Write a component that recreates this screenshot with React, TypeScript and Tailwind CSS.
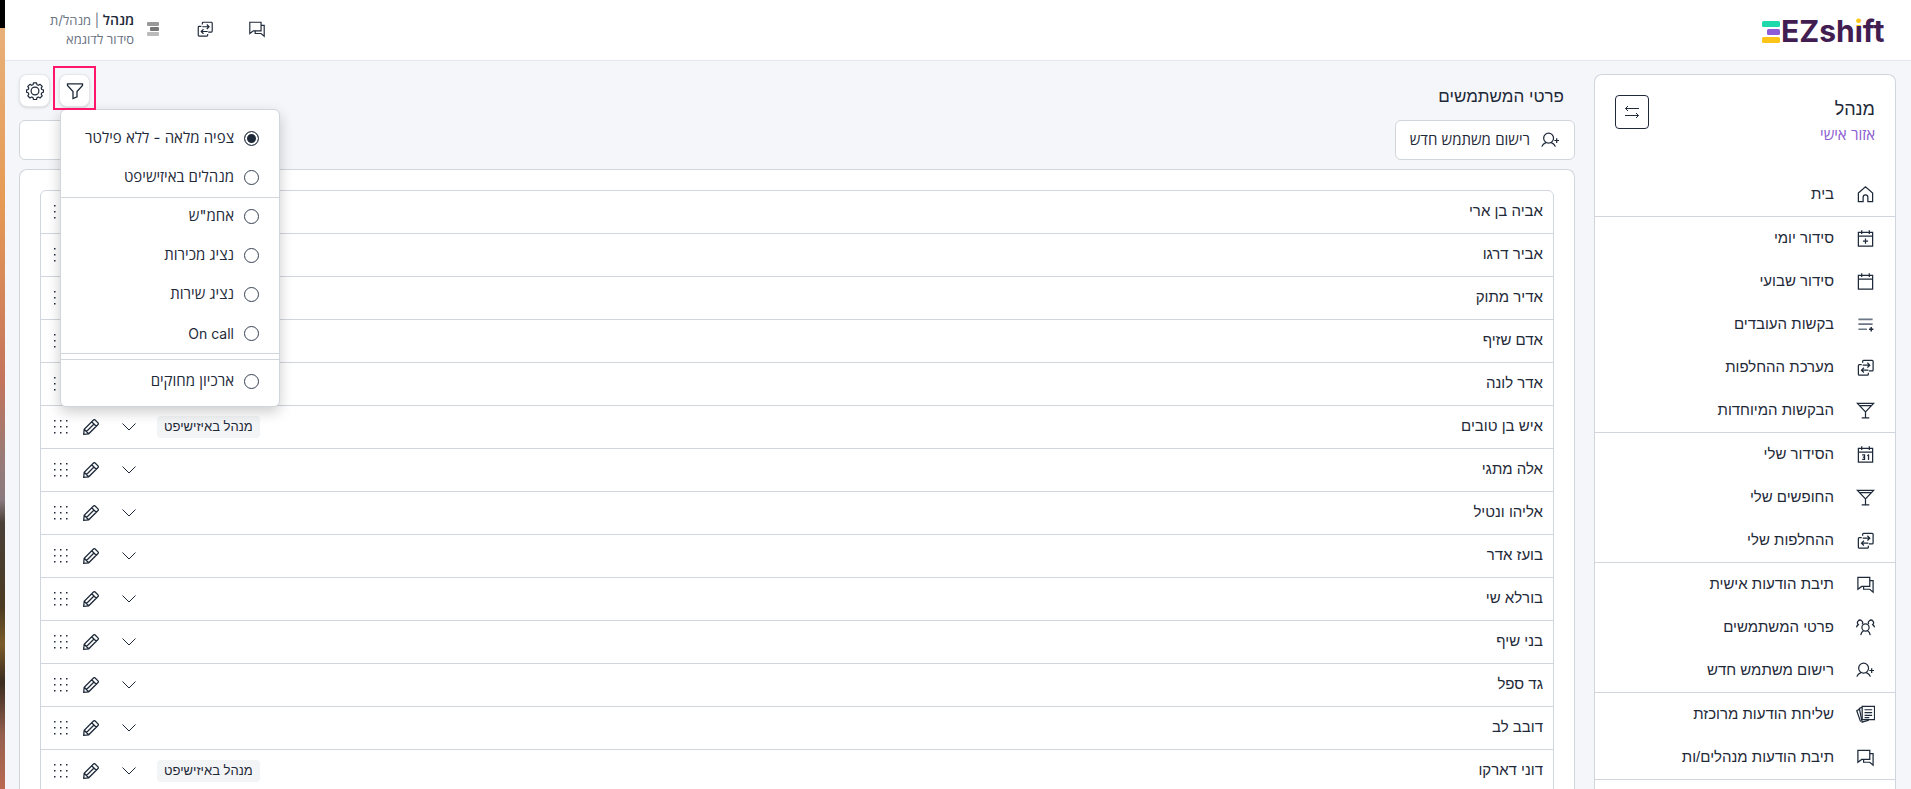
import type { ReactNode } from 'react';

type IconName =
  | 'home' | 'calendarPlus' | 'calendar' | 'calendar31' | 'listPlus' | 'swap'
  | 'glass' | 'chat' | 'users' | 'userPlus' | 'papers';

const shapes: Record<IconName, ReactNode> = {
  home: <path d="M2.5 8.5 10 2l7.500 6.500V17.500H12.500V13a2.500 2.500 0 0 0-5 0v4.500H2.500z" />,
  calendarPlus: <path d="M2.500 3.500h15v14.500h-15zM2.500 7.500h15M6 1.200v4M14 1.200v4M10 10v5.500M7.300 12.700h5.400" />,
  calendar: <path d="M2.500 3.500h15v14.500h-15zM2.500 7.500h15M6 1.200v4M14 1.200v4" />,
  calendar31: (
    <>
      <path d="M2.500 3.500h15v14.500h-15zM2.500 7.500h15M6 1.200v4M14 1.200v4" />
      <path strokeWidth="1.300" d="M6.500 10.500H9v4.700H6.500M7.200 12.800H9M11.800 11.300l1.400-.7v5.200" />
    </>
  ),
  listPlus: (
    <>
      <path stroke="#6b7785" strokeWidth="1.800" d="M2.500 4.500h15M2.500 9.700h15M2.500 15h9" />
      <path strokeWidth="1.500" d="M16 12.700v4.600M13.700 15h4.600" />
    </>
  ),
  swap: (
    <>
      <path d="M7 5V3.500q0-1 1-1h9q1 0 1 1v9q0 1-1 1h-3.500M13 15.500v1.500q0 1-1 1H3.500q-1 0-1-1V8q0-1 1-1H6" />
      <path d="M7 7.500h7M12 5l2.500 2.500L12 10M13 12.800H6M8.300 10.300 5.800 12.800l2.500 2.500" />
    </>
  ),
  glass: <path d="M1.500 2.500h17L10 11.500zM4 4.800h12M10 11.500v6M6 17.800h8" />,
  chat: (
    <>
      <path d="M2 2.500h12.500v9.500H6L2 15z" />
      <path d="M14.500 6H18v12l-3.500-3H8v-3" />
    </>
  ),
  users: (
    <>
      <circle cx="10" cy="10" r="3.800" />
      <path d="M5 18q.500-3.500 3-4.600M15 18q-.500-3.500-3-4.600M6.500 6.500A2.700 2.700 0 1 0 2.500 7Q.800 8 .500 9.800M13.500 6.500a2.700 2.700 0 1 1 4 .5q1.700 1 2 2.800" />
    </>
  ),
  userPlus: (
    <>
      <circle cx="8" cy="7.500" r="5.200" />
      <path d="M.800 16.500q1-3 4.700-4.500M15.200 16.500q-1-3-4.700-4.500M16.500 7.500v5M14 10h5" />
    </>
  ),
  papers: (
    <>
      <path d="M6.500 1.500h13v14h-13z" />
      <path d="M9 5h8M9 8h8M9 11h8M9 13.300h5M6.300 2.500 3.500 3.500l3 14.500 7-2M3.300 4.500.800 6l4 11.500" />
    </>
  ),
};

function Icon({ name, className = 'size-[19px]' }: { name: IconName; className?: string }) {
  return (
    <svg viewBox="0 0 20 20" fill="none" stroke="currentColor" strokeWidth="1.300" className={className} aria-hidden="true">
      {shapes[name]}
    </svg>
  );
}

const menu: { icon: IconName; label: string }[][] = [
  [{ icon: 'home', label: 'בית' }],
  [
    { icon: 'calendarPlus', label: 'סידור יומי' },
    { icon: 'calendar', label: 'סידור שבועי' },
    { icon: 'listPlus', label: 'בקשות העובדים' },
    { icon: 'swap', label: 'מערכת ההחלפות' },
    { icon: 'glass', label: 'הבקשות המיוחדות' },
  ],
  [
    { icon: 'calendar31', label: 'הסידור שלי' },
    { icon: 'glass', label: 'החופשים שלי' },
    { icon: 'swap', label: 'ההחלפות שלי' },
  ],
  [
    { icon: 'chat', label: 'תיבת הודעות אישית' },
    { icon: 'users', label: 'פרטי המשתמשים' },
    { icon: 'userPlus', label: 'רישום משתמש חדש' },
  ],
  [
    { icon: 'papers', label: 'שליחת הודעות מרוכזת' },
    { icon: 'chat', label: 'תיבת הודעות מנהלים/ות' },
  ],
];

const users: { name: string; badge?: string }[] = [
  { name: 'אביה בן ארי' },
  { name: 'אביר דרגו' },
  { name: 'אדיר מתוק' },
  { name: 'אדם שזיף' },
  { name: 'אדר לונה' },
  { name: 'איש בן טובים', badge: 'מנהל באיזישיפט' },
  { name: 'אלה מתגי' },
  { name: 'אליהו ונטיל' },
  { name: 'בועז אדר' },
  { name: 'בורלא שי' },
  { name: 'בני שיף' },
  { name: 'גד ספל' },
  { name: 'דובב לב' },
  { name: 'דוני דארקו', badge: 'מנהל באיזישיפט' },
];

// the sturdier Hebrew face, for names, menu entries and headings
const strongFont = "font-['Liberation_Sans',sans-serif]";

function Logo() {
  return (
    <svg viewBox="0 0 128 40" className="h-10 w-32" direction="ltr" role="img" aria-label="EZshift">
      <defs>
        {/* paints the dot of the "i" yellow and its stem purple */}
        <linearGradient id="dot" gradientUnits="userSpaceOnUse" x1="0" y1="0" x2="0" y2="40">
          <stop offset="0.400" stopColor="#fcc419" />
          <stop offset="0.400" stopColor="#421d52" />
        </linearGradient>
      </defs>
      <rect x="0" y="11" width="18" height="6" rx="1.500" fill="#1fd8ac" />
      <rect x="5" y="19" width="13" height="6" rx="1.500" fill="#8b5cd6" />
      <rect x="0" y="27" width="18" height="6" rx="1.500" fill="#fcc419" />
      <text x="19" y="32" fill="#421d52" fontFamily="Inter, sans-serif" fontWeight="700" fontSize="30">
        EZsh<tspan fill="url(#dot)">i</tspan>ft
      </text>
    </svg>
  );
}

function Header() {
  return (
    <header className="flex h-[61px] shrink-0 items-center justify-between border-b border-[#e3e6f0] bg-white ps-[21px] pe-[45px]">
      <a href="#home"><Logo /></a>
      <div className="flex items-center pb-[2px]">
        <button aria-label="הודעות" className="me-[34px]"><Icon name="chat" className="size-[18px]" /></button>
        <button aria-label="החלפות" className="me-[37px]"><Icon name="swap" className="size-[18px]" /></button>
        <svg viewBox="0 0 12 14" className="me-[13px] h-[14px] w-3" aria-hidden="true">
          <rect width="12" height="4" rx="1" fill="#999" />
          <rect x="3" y="5" width="9" height="4" rx="1" fill="#777" />
          <rect y="10" width="12" height="4" rx="1" fill="#bbb" />
        </svg>
        <div className="text-[13px] leading-[19px] text-gray-500">
          <p><strong className="text-[14px] font-semibold text-gray-800">מנהל</strong> | מנהל/ת</p>
          <p>סידור לדוגמא</p>
        </div>
      </div>
    </header>
  );
}

function Sidebar() {
  return (
    <aside className="w-[302px] shrink-0 rounded-t-lg border border-b-0 border-gray-300 bg-white">
      <div className="flex h-[98px] items-start justify-between px-5 pt-5">
        <div>
          <h2 className={`text-[18px] leading-7 ${strongFont}`}>מנהל</h2>
          <p className="text-[15px] leading-6 text-[#8b5cd0]">אזור אישי</p>
        </div>
        <button aria-label="כיווץ התפריט" className="flex size-[34px] items-center justify-center rounded border border-gray-800">
          <svg viewBox="0 0 16 16" fill="none" stroke="currentColor" className="size-4" aria-hidden="true">
            <path d="M15 4.500H1.500M4 2 1.500 4.500 4 7M1 11.500h13.500M12 9l2.500 2.500L12 14" />
          </svg>
        </button>
      </div>
      <nav className={strongFont}>
        {menu.map((group, i) => (
          <ul key={i} className="border-b border-gray-300">
            {group.map((item) => (
              <li key={item.label}>
                <a href="#menu" className="flex h-[43px] items-center gap-[22px] ps-5 pb-px text-[15px]">
                  <Icon name={item.icon} />
                  {item.label}
                </a>
              </li>
            ))}
          </ul>
        ))}
      </nav>
    </aside>
  );
}

function FilterOption({ label, checked, size = 'text-[15px]' }: { label: string; checked?: boolean; size?: string }) {
  return (
    <label className={`flex h-[39px] items-center gap-[10px] px-5 ${size}`}>
      <input
        type="radio"
        name="filter"
        defaultChecked={checked}
        className="size-[15px] appearance-none rounded-full border border-gray-700 bg-white checked:bg-gray-800 checked:shadow-[inset_0_0_0_2px_#fff]"
      />
      {label}
    </label>
  );
}

function FilterMenu() {
  return (
    <div className="absolute top-[35px] left-px z-10 w-[220px] rounded-md border border-gray-300 bg-white pt-[9px] pb-[5px] shadow-[0_5px_14px_rgba(0,0,0,0.2)]">
      <div className="-mb-px border-b border-gray-300">
        <FilterOption label="צפיה מלאה - ללא פילטר" checked />
        <FilterOption label="מנהלים באיזישיפט" />
      </div>
      <div className="border-b border-gray-300">
        <FilterOption label={'אחמ"ש'} />
        <FilterOption label="נציג מכירות" />
        <FilterOption label="נציג שירות" />
        <FilterOption label="On call" size="text-[14px]" />
      </div>
      <div className="mt-[5px] border-t border-gray-300 pt-[2px]">
        <FilterOption label="ארכיון מחוקים" />
      </div>
    </div>
  );
}

function Toolbar() {
  const button = 'flex h-[33px] w-[31px] items-center justify-center rounded-lg border border-gray-200 bg-white shadow-sm';
  return (
    <div className="flex gap-[9px]">
      <div className="relative">
        <button aria-label="סינון" className={button}>
          <svg viewBox="0 0 18 18" fill="none" stroke="currentColor" strokeWidth="1.300" className="size-[18px]" aria-hidden="true">
            <path d="M1.500 1.800h15v1.700L11 9.500v5.300l-4 1.700v-7L1.500 3.500z" />
          </svg>
        </button>
        <span className="pointer-events-none absolute -inset-x-[6px] -top-2 -bottom-[3px] z-20 border-2 border-[#ff1569]" />
        <FilterMenu />
      </div>
      <button aria-label="הגדרות" className={button}>
        <svg viewBox="0 0 18 18" fill="none" stroke="currentColor" strokeWidth="1.200" strokeLinejoin="round" className="size-[18px]" aria-hidden="true">
          <path d="M7.500.8h3l.5 1.900 1.400.6 1.700-1 2.100 2.100-1 1.700.6 1.400 1.600.4v2.400l-1.600.5-.6 1.400 1 1.700-2.100 2.100-1.700-1-1.400.6-.5 1.900h-3l-.5-1.900-1.400-.6-1.700 1-2.100-2.100 1-1.700-.6-1.400-1.600-.5V7.900l1.600-.4.6-1.400-1-1.700 2.100-2.100 1.700 1L7 2.700z" />
          <circle cx="9" cy="9" r="3.900" />
        </svg>
      </button>
    </div>
  );
}

function UserRow({ name, badge }: { name: string; badge?: string }) {
  return (
    <li className={`flex h-[43px] items-center border-b border-gray-300 ps-[10px] pe-[13px] pb-px text-[15px] ${strongFont}`}>
      <span className="flex-1">{name}</span>
      {badge && <span className="me-[21px] h-[22px] rounded bg-gray-100 px-[7px] text-[13px] leading-[22px]">{badge}</span>}
      <button aria-label="הרחבה" className="me-[23px]">
        <svg viewBox="0 0 14 14" fill="none" stroke="currentColor" className="size-[14px]" aria-hidden="true">
          <path d="m.500 3.500 6.500 6.500 6.500-6.500" />
        </svg>
      </button>
      <button aria-label="עריכה" className="me-[15px]">
        <svg viewBox="0 0 16 16" fill="none" stroke="currentColor" strokeWidth="1.300" className="size-4" aria-hidden="true">
          <path d="m.700 15.300.5-5L10.500 1q.8-.7 1.600 0L15 3.900q.7.800 0 1.600L5.700 14.800zM1.200 10.300l4.500 4.500M8.700 2.800l4.500 4.500M3.500 12.500l7.500-7.500" />
        </svg>
      </button>
      <button aria-label="גרירה">
        <svg viewBox="0 0 14 14" fill="currentColor" className="size-[14px]" aria-hidden="true">
          <path d="M0 0h1.500v1.500H0zM6 0h1.500v1.500H6zM12 0h1.500v1.500H12zM0 6h1.500v1.500H0zM6 6h1.500v1.500H6zM12 6h1.500v1.500H12zM0 12h1.500v1.500H0zM6 12h1.500v1.500H6zM12 12h1.500v1.500H12z" />
        </svg>
      </button>
    </li>
  );
}

export default function App() {
  return (
    <div dir="rtl" className="flex h-screen overflow-hidden bg-[#f5f6f9] font-['Inter','Open_Sans',sans-serif] text-gray-800">
      <div className="flex min-w-0 flex-1 flex-col">
        <Header />
        <div className="flex min-h-0 flex-1 gap-[19px] ps-[15px] pe-[14px] pt-[13px]">
          <Sidebar />
          <main className="flex min-w-0 flex-1 flex-col">
            <div className="flex h-[46px] items-start justify-between">
              <h1 className={`ps-[11px] pt-[11px] text-[17px] leading-6 ${strongFont}`}>פרטי המשתמשים</h1>
              <Toolbar />
            </div>
            <div className="flex justify-between">
              <button className="flex h-10 items-center gap-[11px] rounded-md border border-gray-300 bg-white px-[14px] text-[15px]">
                <Icon name="userPlus" />
                רישום משתמש חדש
              </button>
              <input aria-label="חיפוש" className="h-10 w-60 rounded-md border border-gray-300 bg-white px-3" />
            </div>
            <section className="mt-[9px] min-h-0 flex-1 overflow-hidden rounded-t-lg border border-b-0 border-gray-300 bg-white px-5 pt-5">
              <ul className="rounded-t-md border border-gray-300">
                {users.map((user) => (
                  <UserRow key={user.name} {...user} />
                ))}
              </ul>
            </section>
          </main>
        </div>
      </div>
      {/* the desktop wallpaper that shows beside the window */}
      <div className="flex w-[5px] shrink-0 flex-col">
        <div className="h-7 bg-black" />
        <div className="flex-1 bg-[linear-gradient(#e8b078,#e69a55_23%,#c5745c_46%,#9a7a76_56%,#8a7a80_62%,#4a4038_65%,#4a3a22_76%,#7a5a2a_81%,#3a2c20_86%,#96604f_93%,#b96a50)]" />
      </div>
    </div>
  );
}
